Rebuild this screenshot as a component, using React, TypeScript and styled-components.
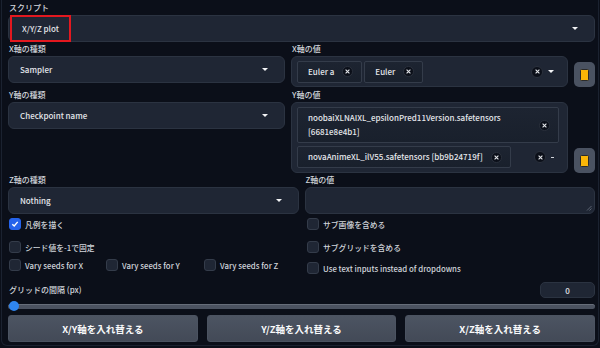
import React, { FC } from 'react';
import styled, { createGlobalStyle } from 'styled-components';

const GlobalStyle = createGlobalStyle`
    html, body {
        margin: 0;
        padding: 0;
        background: #0b0f19;
    }
    body {
        font-family: "Noto Sans CJK JP", "Noto Sans", sans-serif;
        color: #e5e7eb;
    }
    * {
        box-sizing: border-box;
    }
`;

const Panel = styled.div`
    width: 598px;
    height: 346px;
    margin-left: 1px;
    border: 1px solid #1b2230;
    border-top: none;
    border-radius: 0 0 6px 6px;
    padding: 2px 3px 0 6px;
    display: flex;
    flex-direction: column;
`;

const Label = styled.div`
    font-size: 8px;
    line-height: 12px;
    font-weight: 500;
    color: #d1d5db;
    padding-left: 1px;
    margin-bottom: 1px;
    white-space: nowrap;
`;

const Row = styled.div<{ $mt?: number }>`
    display: flex;
    gap: 6px;
    margin-top: ${(p) => p.$mt ?? 0}px;
    align-items: stretch;
`;

const Field = styled.div`
    flex: 1 1 0;
    min-width: 0;
    display: flex;
    flex-direction: column;
`;

const Select = styled.div<{ $pad?: number }>`
    height: 27px;
    background: #1f2634;
    border: 1px solid #2b3341;
    border-radius: 6px;
    display: flex;
    align-items: center;
    padding: 0 16px 0 ${(p) => p.$pad ?? 11}px;
    font-size: 8px;
    font-weight: 500;
    color: #e5e7eb;
`;

const Value = styled.span`
    flex: 1;
    align-self: stretch;
    display: flex;
    align-items: center;
`;

const Highlight = styled.span`
    align-self: stretch;
    display: inline-flex;
    align-items: center;
    padding: 0 10px;
    border: 2px solid #e3181f;
    margin: -1px 0;
`;

const Caret = styled.span`
    width: 0;
    height: 0;
    border-left: 3px solid transparent;
    border-right: 3px solid transparent;
    border-top: 3px solid #f3f4f6;
`;

const Dash = styled.span`
    width: 3px;
    height: 1px;
    background: #d1d5db;
`;

const MultiBox = styled.div<{ $h: number }>`
    height: ${(p) => p.$h}px;
    background: #1f2634;
    border: 1px solid #2b3341;
    border-radius: 6px;
    padding: 4px 8px 4px 5px;
    display: flex;
    flex-wrap: wrap;
    align-content: center;
    align-items: center;
    gap: 3px 2px;
`;

const Chip = styled.div`
    max-width: 100%;
    display: flex;
    align-items: center;
    gap: 8px;
    padding: 3px 8px 3px 10px;
    min-height: 22px;
    background: linear-gradient(#1d2431, #19202c);
    border: 1px solid #343c4a;
    border-radius: 2px;
    font-size: 8px;
    font-weight: 500;
    line-height: 14px;
    color: #e5e7eb;
`;

const ChipText = styled.span`
    flex: 1;
`;

const XCircle = styled.span<{ $size: number }>`
    flex: none;
    width: ${(p) => p.$size}px;
    height: ${(p) => p.$size}px;
    border-radius: 50%;
    background: #0b0f19;
    border: 1px solid #2a303c;
    display: flex;
    align-items: center;
    justify-content: center;
`;

const Controls = styled.div`
    margin-left: auto;
    display: flex;
    align-items: center;
    gap: 5px;
    height: 22px;
    padding-right: 5px;
`;

const ToolButton = styled.button`
    align-self: flex-end;
    flex: none;
    width: 21px;
    height: 25px;
    padding: 0;
    border: none;
    border-radius: 5px;
    background: #4a5261;
    display: flex;
    align-items: center;
    justify-content: center;
`;

const TextArea = styled.div`
    position: relative;
    height: 27px;
    background: #1f2634;
    border: 1px solid #2b3341;
    border-radius: 6px;
`;

const Grip = styled.svg`
    position: absolute;
    right: 2px;
    bottom: 2px;
`;

const Checks = styled.div`
    display: grid;
    grid-template-columns: 298px 1fr;
    margin-top: 3px;
`;

const CheckCol = styled.div`
    display: flex;
    flex-direction: column;
`;

const CheckLine = styled.div<{ $mt?: number }>`
    display: flex;
    margin-top: ${(p) => p.$mt ?? 0}px;
`;

const CheckItem = styled.label<{ $w?: number }>`
    display: flex;
    align-items: center;
    gap: 4px;
    height: 14px;
    width: ${(p) => (p.$w ? `${p.$w}px` : 'auto')};
    padding-left: 1px;
    font-size: 7.8px;
    font-weight: 500;
    color: #d1d5db;
    white-space: nowrap;
`;

const Box = styled.span<{ $on?: boolean }>`
    width: 12px;
    height: 12px;
    border-radius: 3px;
    background: ${(p) => (p.$on ? '#2563eb' : '#1f2634')};
    border: 1px solid ${(p) => (p.$on ? '#2563eb' : '#343c4a')};
    display: flex;
    align-items: center;
    justify-content: center;
`;

const SliderHead = styled.div`
    display: flex;
    justify-content: space-between;
    align-items: center;
    margin-top: 7px;
    height: 16px;
`;

const NumberBox = styled.div`
    width: 55px;
    height: 16px;
    background: #1f2634;
    border: 1px solid #2b3341;
    border-radius: 5px;
    font-size: 8px;
    font-weight: 500;
    display: flex;
    align-items: center;
    justify-content: center;
    color: #e5e7eb;
`;

const Slider = styled.div`
    position: relative;
    height: 10px;
    margin-top: 3px;
    display: flex;
    align-items: center;
`;

const Track = styled.div`
    flex: 1;
    height: 5px;
    border-radius: 3px;
    background: #4b5260;
    border-top: 1px solid #666d79;
`;

const Thumb = styled.span`
    position: absolute;
    left: 1px;
    top: 0;
    width: 10px;
    height: 10px;
    border-radius: 50%;
    background: #2f86f0;
`;

const Buttons = styled.div`
    display: grid;
    grid-template-columns: 1fr 1fr 1fr;
    gap: 9px;
    margin-top: 4px;
`;

const Button = styled.button`
    height: 27px;
    border: 1px solid #4b5361;
    border-radius: 3px;
    background: linear-gradient(#4c5462, #434a57);
    color: #f9fafb;
    font-family: inherit;
    font-size: 9.5px;
    font-weight: 700;
`;

const Close: FC<{ size: number }> = ({ size }) => (
    <XCircle $size={size}>
        <svg width="5" height="5" viewBox="0 0 5 5">
            <path d="M0.6 0.6L4.4 4.4M4.4 0.6L0.6 4.4" stroke="#e5e7eb" strokeWidth="1.1" />
        </svg>
    </XCircle>
);

const Ledger: FC = () => (
    <ToolButton>
        <svg width="9" height="12" viewBox="0 0 9 12">
            <rect x="0.5" y="0.5" width="8" height="11" rx="1" fill="#fbb607" stroke="#2a2a2a" />
        </svg>
    </ToolButton>
);

const Check: FC<{ label: string; on?: boolean; w?: number }> = ({ label, on, w }) => (
    <CheckItem $w={w}>
        <Box $on={on}>
            {on && (
                <svg width="8" height="8" viewBox="0 0 8 8">
                    <path d="M1.3 4.2L3.2 6L6.7 1.9" stroke="#fff" strokeWidth="1.4" fill="none" />
                </svg>
            )}
        </Box>
        {label}
    </CheckItem>
);

export default function App() {
    return (
        <Panel>
            <GlobalStyle />
            <Label>スクリプト</Label>
            <Select $pad={1}>
                <Value>
                    <Highlight>X/Y/Z plot</Highlight>
                </Value>
                <Caret />
            </Select>

            <Row $mt={1}>
                <Field>
                    <Label>X軸の種類</Label>
                    <Select>
                        <Value>Sampler</Value>
                        <Caret />
                    </Select>
                </Field>
                <Field>
                    <Label>X軸の値</Label>
                    <MultiBox $h={31}>
                        <Chip>
                            <ChipText>Euler a</ChipText>
                            <Close size={11} />
                        </Chip>
                        <Chip>
                            <ChipText>Euler</ChipText>
                            <Close size={11} />
                        </Chip>
                        <Controls>
                            <Close size={12} />
                            <Caret />
                        </Controls>
                    </MultiBox>
                </Field>
                <Ledger />
            </Row>

            <Row $mt={2}>
                <Field>
                    <Label>Y軸の種類</Label>
                    <Select>
                        <Value>Checkpoint name</Value>
                        <Caret />
                    </Select>
                </Field>
                <Field>
                    <Label>Y軸の値</Label>
                    <MultiBox $h={71}>
                        <Chip>
                            <ChipText>noobaiXLNAIXL_epsilonPred11Version.safetensors [6681e8e4b1]</ChipText>
                            <Close size={11} />
                        </Chip>
                        <Chip>
                            <ChipText>novaAnimeXL_ilV55.safetensors [bb9b24719f]</ChipText>
                            <Close size={11} />
                        </Chip>
                        <Controls>
                            <Close size={12} />
                            <Dash />
                        </Controls>
                    </MultiBox>
                </Field>
                <Ledger />
            </Row>

            <Row $mt={1}>
                <Field>
                    <Label>Z軸の種類</Label>
                    <Select>
                        <Value>Nothing</Value>
                        <Caret />
                    </Select>
                </Field>
                <Field>
                    <Label>Z軸の値</Label>
                    <TextArea>
                        <Grip width="6" height="6" viewBox="0 0 6 6">
                            <path d="M5.5 1L1 5.5M5.5 3.5L3.5 5.5" stroke="#6b7280" strokeWidth="0.8" />
                        </Grip>
                    </TextArea>
                </Field>
            </Row>

            <Checks>
                <CheckCol>
                    <CheckLine>
                        <Check label="凡例を描く" on />
                    </CheckLine>
                    <CheckLine $mt={9}>
                        <Check label="シード値を-1で固定" />
                    </CheckLine>
                    <CheckLine $mt={4}>
                        <Check label="Vary seeds for X" w={97} />
                        <Check label="Vary seeds for Y" w={98} />
                        <Check label="Vary seeds for Z" />
                    </CheckLine>
                </CheckCol>
                <CheckCol>
                    <CheckLine>
                        <Check label="サブ画像を含める" />
                    </CheckLine>
                    <CheckLine $mt={9}>
                        <Check label="サブグリッドを含める" />
                    </CheckLine>
                    <CheckLine $mt={7}>
                        <Check label="Use text inputs instead of dropdowns" />
                    </CheckLine>
                </CheckCol>
            </Checks>

            <SliderHead>
                <Label>グリッドの間隔 (px)</Label>
                <NumberBox>0</NumberBox>
            </SliderHead>
            <Slider>
                <Track />
                <Thumb />
            </Slider>

            <Buttons>
                <Button>X/Y軸を入れ替える</Button>
                <Button>Y/Z軸を入れ替える</Button>
                <Button>X/Z軸を入れ替える</Button>
            </Buttons>
        </Panel>
    );
}
